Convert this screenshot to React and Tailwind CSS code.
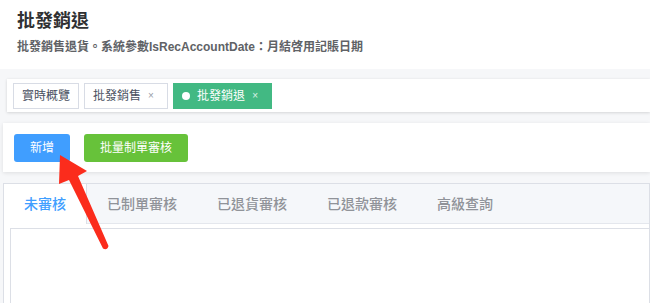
import React from 'react';

const tabs = ['未審核', '已制單審核', '已退貨審核', '已退款審核', '高級查詢'];

function Tag({ label, active, closable }) {
  if (active) {
    return (
      <div className="ml-[5px] flex h-[26px] items-center border border-[#42b983] bg-[#42b983] px-[8px] text-[12px] text-white">
        <span className="mr-[7px] inline-block h-[8px] w-[8px] rounded-full bg-white" />
        <span>{label}</span>
        <span className="ml-[2px] flex h-[16px] w-[16px] items-center justify-center text-[10px] leading-none text-white/80">×</span>
      </div>
    );
  }
  return (
    <div className="ml-[5px] flex h-[26px] items-center border border-[#d8dce5] bg-white px-[8px] text-[12px] text-[#495060] first:ml-[6px]">
      <span>{label}</span>
      {closable && (
        <span className="ml-[2px] flex h-[16px] w-[16px] items-center justify-center text-[10px] leading-none text-[#9a9ea8]">×</span>
      )}
    </div>
  );
}

export default function App() {
  return (
    <div
      className="relative h-[303px] w-[650px] overflow-hidden bg-[#f6f7f9]"
      style={{ fontFamily: '"Liberation Sans", "Noto Sans CJK TC", sans-serif' }}
    >
      {/* page header */}
      <div className="h-[69px] bg-white px-[17px] pt-[11px]">
        <div className="text-[18px] font-bold leading-[20px] text-[#303133]">批發銷退</div>
        <div className="mt-[9px] text-[12px] font-bold leading-[14px] text-[#606266]">
          批發銷售退貨。系統參數IsRecAccountDate：月結啓用記賬日期
        </div>
      </div>

      {/* tags view */}
      <div className="ml-[7px] mt-[10px] flex h-[33px] items-start bg-white pt-[4px] shadow-[0_1px_3px_0_rgba(0,0,0,0.12),0_0_3px_0_rgba(0,0,0,0.04)]">
        <Tag label="實時概覽" />
        <Tag label="批發銷售" closable />
        <Tag label="批發銷退" active />
      </div>

      {/* toolbar */}
      <div className="ml-[3px] mt-[11px] flex h-[49px] items-start gap-[14px] bg-white pl-[11px] pt-[11px] shadow-[0_1px_4px_0_rgba(0,0,0,0.1)]">
        <button className="h-[28px] rounded-[3px] bg-[#409eff] px-[16px] text-[12px] text-white">新增</button>
        <button className="h-[28px] rounded-[3px] bg-[#67c23a] px-[16px] text-[12px] text-white">批量制單審核</button>
      </div>

      {/* tabs card */}
      <div className="ml-[3px] mt-[11px] border border-[#dcdfe6] bg-white">
        <div className="flex h-[40px] border-b border-[#e4e7ed] bg-[#f5f7fa]">
          {tabs.map((t, i) => (
            <div
              key={t}
              className={
                i === 0
                  ? 'relative -mb-px flex h-[40px] items-center border-r border-[#dcdfe6] bg-white px-[20px] text-[14px] font-medium text-[#409eff]'
                  : 'flex h-[40px] items-center px-[20px] text-[14px] font-medium text-[#909399]'
              }
            >
              {t}
            </div>
          ))}
        </div>
        <div className="pl-[6px] pt-[4px]">
          <div className="h-[80px] border-l border-t border-[#dcdfe6] bg-white" />
        </div>
      </div>

      {/* red annotation arrow */}
      <svg className="pointer-events-none absolute left-0 top-0" width="650" height="303">
        <path
          d="M60,155 L87,171 L78,176 L108.5,246 Q107,251 103,248.5 L69,180 L59,184 Z"
          fill="#fb2c1c"
        />
      </svg>
    </div>
  );
}
